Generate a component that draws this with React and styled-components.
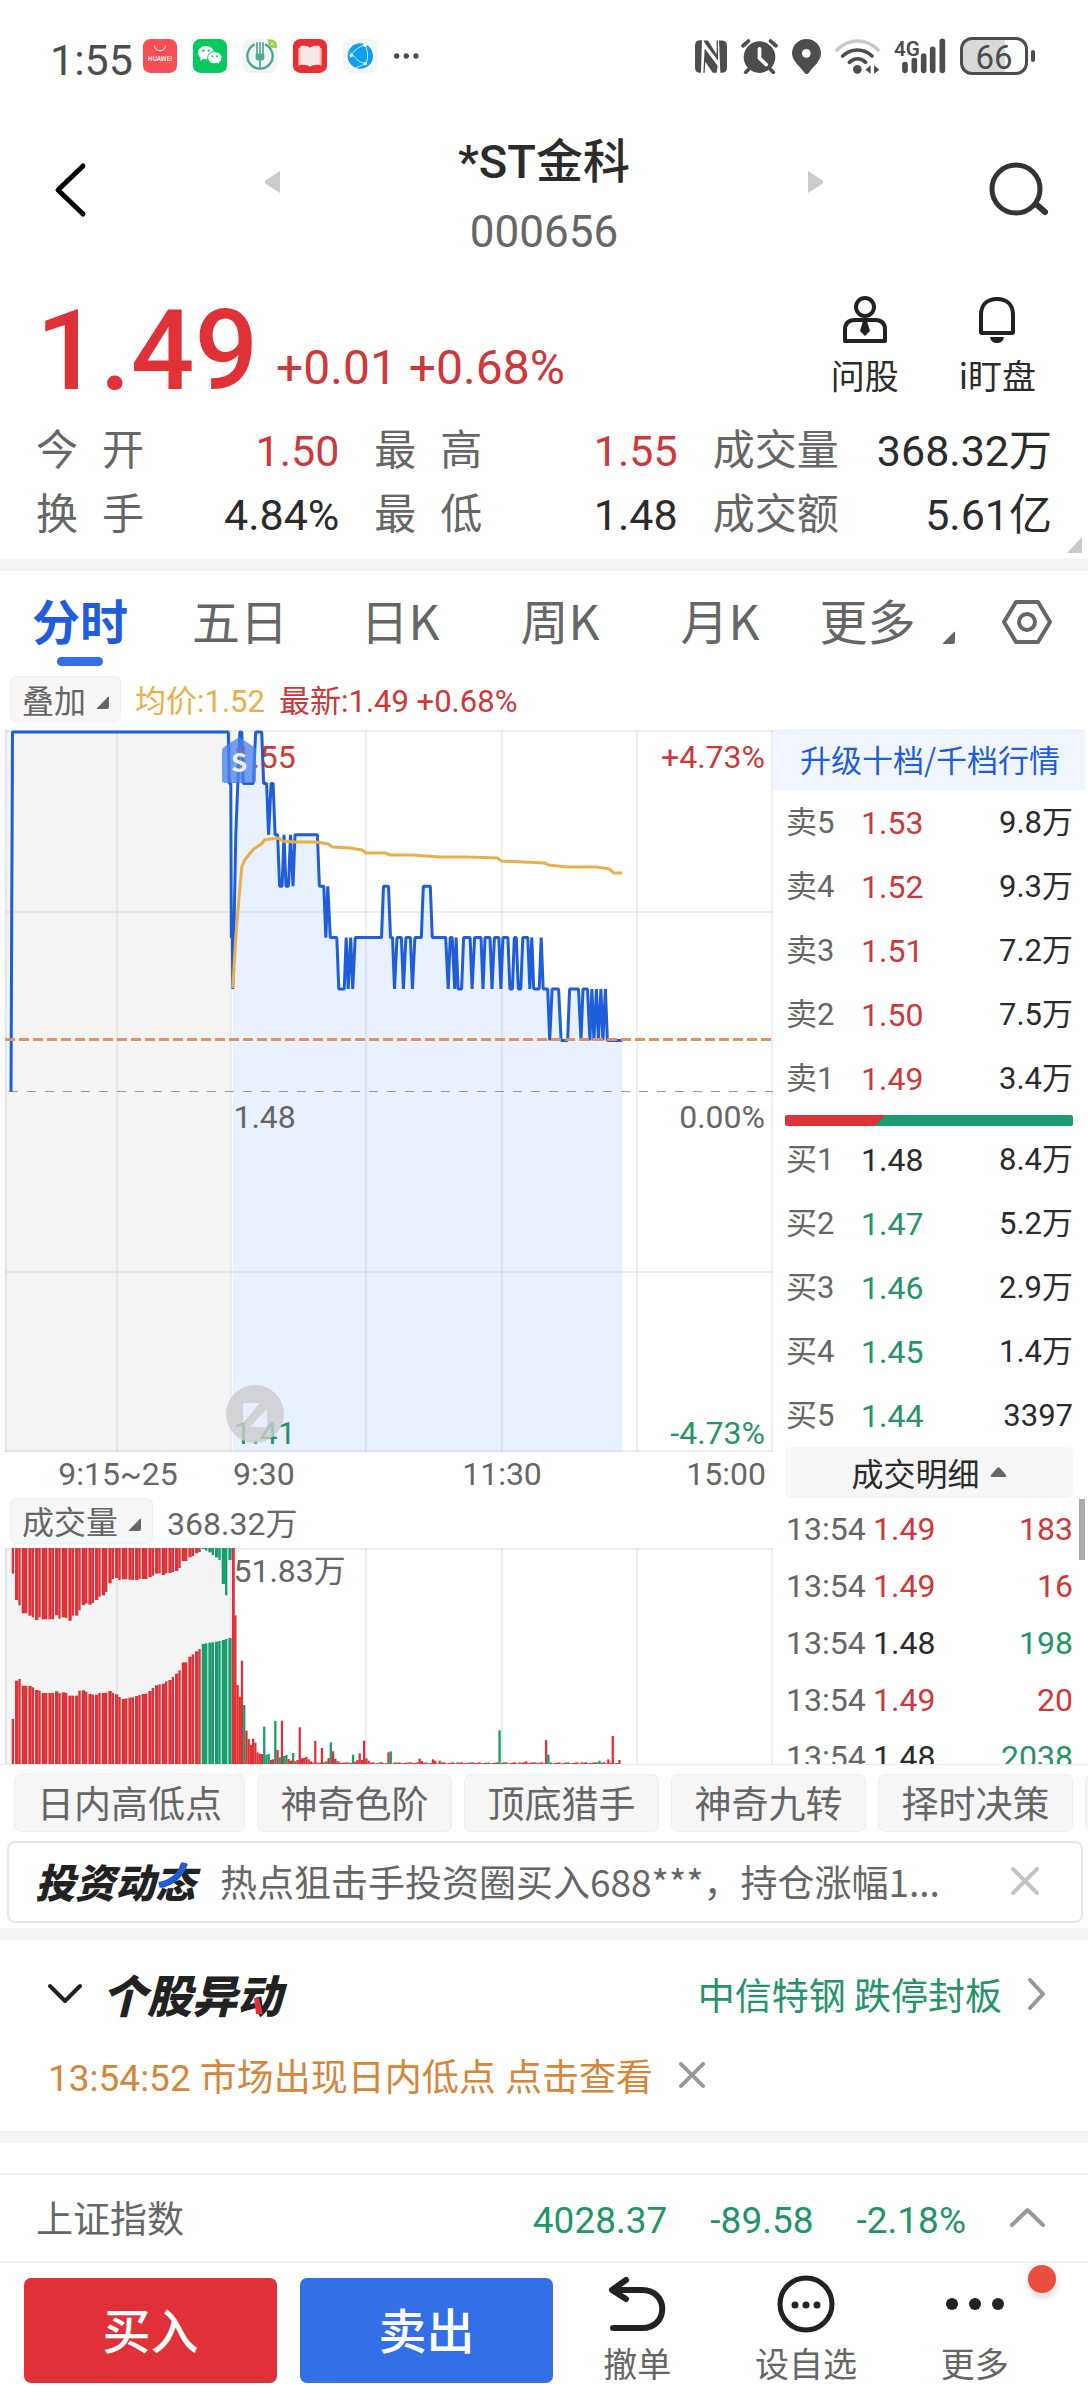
import React from "react";
import styled, { createGlobalStyle, css } from "styled-components";

const c = {
  red: "#cd383b",
  redStrong: "#df3238",
  green: "#249468",
  greenStrong: "#179e6c",
  blue: "#1f5dda",
  blueSoft: "#356fe5",
  ink: "#2b2b2b",
  grey: "#666666",
  faint: "#c4c4c4",
  line: "#ececec",
  band: "#f4f4f4",
  amber: "#e9af4c",
  orange: "#d4863a",
};

const toneColor = {
  up: c.red,
  down: c.green,
  flat: c.ink,
};

const GlobalStyle = createGlobalStyle`
  * { box-sizing: border-box; }
  body {
    margin: 0;
    background: #fff;
    color: ${c.ink};
    font-family: "Noto Sans CJK SC", "Noto Sans", sans-serif;
    -webkit-font-smoothing: antialiased;
  }
  button {
    font: inherit;
    color: inherit;
    background: none;
    border: 0;
    padding: 0;
    margin: 0;
    cursor: pointer;
  }
  svg { display: block; }
`;

const Page = styled.main`
  width: 100%;
  overflow: hidden;
  white-space: nowrap;
`;

// Figures are set in Roboto while keeping the baseline of the surrounding Chinese text.
const Num = styled.span`
  font-family: Roboto, "Noto Sans CJK SC", sans-serif;
  line-height: 0;
`;

const Band = styled.div`
  height: 12px;
  background: ${c.band};
`;

/* ---------- status bar ---------- */

const StatusBar = styled.header`
  display: flex;
  align-items: center;
  justify-content: space-between;
  height: 112px;
  padding: 0 53px 0 50px;
  color: #4d4d4d;
`;

const StatusGroup = styled.div`
  display: flex;
  align-items: center;
  gap: ${(p) => p.$gap}px;
`;

const Clock = styled.time`
  font-size: 43px;
  line-height: 44px;
  margin-right: -6px;
`;

const Battery = styled.div`
  display: flex;
  align-items: center;
  gap: 3px;
`;

const BatteryCell = styled.div`
  width: 68px;
  height: 38px;
  border: 3px solid #4d4d4d;
  border-radius: 12px;
  background: linear-gradient(to right, #d9d9d9 68%, #fff 68%);
  font-size: 33px;
  line-height: 30px;
  text-align: center;
`;

const BatteryTip = styled.div`
  width: 4px;
  height: 12px;
  border-radius: 2px;
  background: #4d4d4d;
`;

function AppStoreIcon() {
  return (
    <svg width="34" height="34" viewBox="0 0 102 102">
      <rect width="102" height="102" rx="22" fill="#f74f55" />
      <path d="M34 19c2 22 32 22 34 0" fill="none" stroke="#fff" strokeWidth="3" />
      <text x="51" y="66" textAnchor="middle" fontSize="19" fontWeight="500" fill="#fff">HUAWEI</text>
    </svg>
  );
}

function ChatIcon() {
  return (
    <svg width="34" height="34" viewBox="0 0 102 102">
      <rect width="102" height="102" rx="22" fill="#06c95f" />
      <path d="M39 21c-14 0-24 9-24 20 0 6 3 11 8 15l-2 9 9-5c3 1 6 1 9 1 13 0 24-9 24-20S53 21 39 21z" fill="#fff" />
      <path d="M65 38c-12 0-21 8-21 18s9 18 21 18c3 0 5 0 8-1l8 4-2-7c5-3 8-8 8-14 0-10-10-18-22-18z" fill="#fff" stroke="#06c95f" strokeWidth="3" />
      <g fill="#06c95f">
        <circle cx="31" cy="35" r="3.5" />
        <circle cx="47" cy="35" r="3.5" />
        <circle cx="58" cy="52" r="3" />
        <circle cx="72" cy="52" r="3" />
      </g>
    </svg>
  );
}

function BankIcon() {
  return (
    <svg width="34" height="34" viewBox="0 0 102 102">
      <rect width="102" height="102" rx="22" fill="#f3f5f5" />
      <path d="M36 16a38 38 0 1 0 30 0" fill="none" stroke="#4da596" strokeWidth="7" />
      <path d="M42 10v36M60 10v36M51 10v76" fill="none" stroke="#4da596" strokeWidth="5" />
      <path d="M38 44h26v12q0 8-8 8H46q-8 0-8-8z" fill="#4da596" />
      <path d="M72 0c6 4 10 0 18 2 10 4 12 14 12 24-10 2-20 0-24-8-3-6-1-10-6-18z" fill="#8fce3c" />
      <path d="M80 8l16 14M94 8L82 20" stroke="#fff" strokeWidth="2" />
    </svg>
  );
}

function ReaderIcon() {
  return (
    <svg width="34" height="34" viewBox="0 0 102 102">
      <rect width="102" height="102" rx="22" fill="#e72f33" />
      <path d="M16 29l8-6v54l-8 4zM86 29l-8-6v54l8 4z" fill="#f7b7b4" />
      <path d="M22 22c10-3 20-1 29 4 9-5 19-7 29-4v56c-10-2-20 0-29 5-9-5-19-7-29-5z" fill="#f5e8e6" />
    </svg>
  );
}

function BrowserIcon() {
  return (
    <svg width="34" height="34" viewBox="0 0 102 102">
      <rect width="102" height="102" rx="22" fill="#f3f4f5" />
      <circle cx="52" cy="51" r="38" fill="#109fee" />
      <path d="M66 16C44 26 28 38 22 56M22 40c18 22 30 32 46 34M66 18c10 20 10 40 2 56M68 74c-14 6-22 10-28 12" fill="none" stroke="#d8f0fd" strokeWidth="3" />
      <g fill="#fff">
        <circle cx="66" cy="19" r="5" />
        <circle cx="25" cy="49" r="5" />
        <circle cx="67" cy="74" r="5" />
      </g>
    </svg>
  );
}

function MoreDots() {
  return (
    <svg width="26" height="34" viewBox="0 0 78 102" fill="#4d4d4d">
      <circle cx="11" cy="51" r="8" />
      <circle cx="40" cy="51" r="8" />
      <circle cx="69" cy="51" r="8" />
    </svg>
  );
}

function NfcIcon() {
  return (
    <svg width="32" height="33" viewBox="45 59 96 98" fill="#4d4d4d">
      <path d="M61 59h5l-3 98h-3q-15 0-15-16V75q0-16 16-16zM117 60h8q16 0 16 16v65q0 16-16 16h-4z" />
      <path d="M70 60h14l26 42V60h4v60L77 72z" />
      <path d="M74 84l39 52-3 21H98L76 124l-2 33h-4z" />
    </svg>
  );
}

function AlarmIcon() {
  return (
    <svg width="37" height="35" viewBox="183 56 110 104">
      <circle cx="238" cy="110" r="47" fill="#4d4d4d" />
      <path d="M189 76l16-14M287 76l-16-14M206 146l-9 9M270 146l9 9" stroke="#4d4d4d" strokeWidth="11" strokeLinecap="round" />
      <path d="M238 85v28l20 19" fill="none" stroke="#fff" strokeWidth="11" strokeLinecap="round" strokeLinejoin="round" />
    </svg>
  );
}

function PinIcon() {
  return (
    <svg width="29" height="35" viewBox="336 55 87 105">
      <path d="M380 55c-25 0-44 19-44 43 0 25 27 41 36 57 4 7 12 7 16 0 9-16 35-32 35-57 0-24-19-43-43-43z" fill="#4d4d4d" />
      <circle cx="379" cy="98" r="13" fill="#fff" />
    </svg>
  );
}

function WifiIcon() {
  return (
    <svg width="45" height="35" viewBox="465 55 135 105" fill="none" strokeLinecap="round" strokeWidth="11">
      <path d="M471 88c36-36 87-36 123 0" stroke="#c9c9c9" />
      <path d="M488 106c26-24 62-24 88 0M508 125c15-14 34-14 49 0" stroke="#4d4d4d" />
      <circle cx="532" cy="146" r="13" fill="#4d4d4d" />
      <path d="M572 134v25l-16-12zM582 134v25l16-12z" fill="#4d4d4d" />
    </svg>
  );
}

function SignalIcon() {
  return (
    <svg width="52" height="36" viewBox="641 54 156 108" overflow="visible">
      <text x="641" y="107" fontSize="62" fontWeight="600" fill="#4d4d4d" fontFamily="Roboto, sans-serif">4G</text>
      <path d="M674 134v17M702 122v29M730 108v43M757 88v63M786 64v87" stroke="#4d4d4d" strokeWidth="17" strokeLinecap="round" />
    </svg>
  );
}

/* ---------- title bar ---------- */

const TitleBar = styled.nav`
  display: grid;
  grid-template-columns: 1fr 2.1fr 1fr;
  align-items: center;
  height: 158px;
`;

const BackButton = styled.button`
  justify-self: start;
  padding: 0 0 2px 54px;
`;

const SearchButton = styled.button`
  justify-self: end;
  padding: 0 39px 4px 0;
`;

const StockSwitcher = styled.div`
  display: flex;
  align-items: center;
  justify-content: space-between;
`;

const StepButton = styled.button`
  padding-bottom: 18px;
`;

const StockTitle = styled.h1`
  margin: 0;
  padding-top: 3px;
  font-size: 47px;
  font-weight: 500;
  line-height: 70px;
  text-align: center;
`;

const StockCode = styled.span`
  display: block;
  font-size: 44px;
  font-weight: 400;
  color: ${c.grey};
`;

/* ---------- quote ---------- */

const Quote = styled.section`
  position: relative;
  padding: 10px 36px 16px;
`;

const PriceRow = styled.div`
  display: flex;
  align-items: flex-end;
  gap: 18px;
  height: 120px;
`;

const Price = styled.strong`
  font-size: 112px;
  font-weight: 500;
  line-height: 120px;
  color: ${c.redStrong};
`;

const Change = styled.span`
  font-size: 48px;
  line-height: 74px;
  color: ${c.red};
`;

const QuickActions = styled.div`
  display: flex;
  gap: 60px;
  margin: 0 16px 0 auto;
`;

const QuickAction = styled.button`
  display: flex;
  flex-direction: column;
  align-items: center;
  gap: 8px;
  font-size: 34px;
  line-height: 46px;
  padding-bottom: 2px;
`;

const Stats = styled.dl`
  display: grid;
  grid-template-columns: 303fr 303fr 339fr;
  column-gap: 35px;
  margin: 15px 0 0;
`;

const Stat = styled.div`
  display: flex;
  justify-content: space-between;
  line-height: 64px;
`;

const StatLabel = styled.dt`
  width: ${(p) => (p.$wide ? "auto" : "108px")};
  font-size: 42px;
  color: ${c.grey};
  text-align: justify;
  text-align-last: justify;
`;

const StatValue = styled.dd`
  margin: 0;
  font-size: 43px;
  color: ${(p) => toneColor[p.$tone]};
`;

const ExpandCorner = styled.svg`
  position: absolute;
  right: 6px;
  bottom: 6px;
`;

const stats = [
  ["今 开", "1.50", "up"],
  ["最 高", "1.55", "up"],
  ["成交量", "368.32万", "flat"],
  ["换 手", "4.84%", "flat"],
  ["最 低", "1.48", "flat"],
  ["成交额", "5.61亿", "flat"],
];

/* ---------- period tabs ---------- */

const Tabs = styled.nav`
  display: grid;
  grid-template-columns: repeat(6, 160fr) 128fr;
  height: 99px;
  padding-top: 16px;
`;

const Tab = styled.button`
  display: flex;
  flex-direction: column;
  align-items: center;
  gap: 6px;
  font-size: 48px;
  line-height: 64px;
  color: ${c.grey};
  ${(p) =>
    p.$active &&
    css`
      font-weight: 700;
      color: ${c.blue};
      &::after {
        content: "";
        width: 46px;
        height: 9px;
        border-radius: 5px;
        background: ${c.blueSoft};
      }
    `}
`;

const MoreTab = styled(Tab)`
  flex-direction: row;
  align-items: flex-start;
  justify-content: center;
  gap: 26px;
  padding-left: 14px;
  & > svg { margin-top: 44px; }
`;

const SettingsButton = styled.button`
  display: flex;
  justify-content: center;
  height: 44px;
  margin-top: 13px;
  padding-left: 6px;
`;

/* ---------- chart ---------- */

const Legend = styled.div`
  display: flex;
  align-items: center;
  gap: 14px;
  height: ${(p) => p.$height}px;
  padding: 0 0 2px 10px;
`;

const Picker = styled.button`
  display: flex;
  align-items: center;
  gap: 10px;
  height: 46px;
  padding: 0 11px 1px;
  border: 1px solid #f1f1f1;
  border-radius: 6px;
  background: #f7f7f7;
  font-size: 32px;
  line-height: 42px;
  color: ${c.grey};
  & > svg { margin-top: 8px; }
`;

const LegendText = styled.span`
  font-size: ${(p) => (p.$large ? 32 : 31)}px;
  line-height: 42px;
  color: ${(p) => p.$color};
`;

const Market = styled.div`
  display: grid;
  grid-template-columns: minmax(0, 1fr) 315px;
  height: 1035px;
  border-bottom: 1px solid ${c.line};
`;

const ChartColumn = styled.div`
  min-width: 0;
`;

const Plot = styled.div`
  position: relative;
  height: ${(p) => p.$height}px;
  padding-left: 5px;
  & > svg { width: 100%; height: 100%; }
`;

const PlotLabel = styled.span`
  position: absolute;
  font-size: 32px;
  line-height: 40px;
  color: ${(p) => p.$color};
  top: ${(p) => p.$top};
  ${(p) => (p.$end ? "right: 8px;" : "left: 30.2%;")}
`;

const SellMarker = styled.svg`
  position: absolute;
  && { width: 34px; height: 46px; }
  left: 28.7%;
  top: 7px;
`;

const FullscreenButton = styled.button`
  position: absolute;
  left: 29.2%;
  bottom: 9px;
`;

const TimeAxis = styled.div`
  display: grid;
  grid-template-columns: 226fr 191fr 160fr 191fr;
  height: 43px;
  padding-left: 5px;
  font-size: 32px;
  line-height: 38px;
  color: ${c.grey};
`;

const AxisTick = styled.span`
  text-align: ${(p) => p.$align};
  padding: 0 7px 0 ${(p) => (p.$align === "left" ? 2 : 7)}px;
`;

const PLOT_W = 768;
const PRICE_H = 722;
const VOL_H = 216;
const GRID_X = [1, 112, 226, 361, 497, 632, 767];

const tickX = (t) => ((t - 10) / 1542) * 767;
const levelY = (n) => 2 + n * 51.4;

// [time, ticks below the day's high]
const priceSeries = [
  [22, 7], [25, 0], [459, 0], [461, 1], [464, 1], [465, 4], [467, 4], [468, 5], [474, 2], [482, 0], [486, 0],
  [489, 1], [509, 1], [514, 0], [526, 0], [530, 1], [536, 1], [540, 2], [545, 1], [549, 1], [553, 2], [558, 2],
  [562, 3], [567, 3], [571, 2], [575, 3], [580, 3], [584, 2], [589, 3], [593, 2], [638, 2], [642, 3], [651, 3],
  [655, 4], [659, 3], [664, 4], [677, 4], [681, 5], [692, 5], [696, 4], [700, 5], [705, 4], [709, 5], [714, 4],
  [767, 4], [771, 3], [781, 3], [785, 4], [789, 4], [793, 5], [798, 4], [807, 4], [811, 5], [816, 4], [825, 4],
  [829, 5], [834, 4], [847, 4], [851, 3], [865, 3], [869, 4], [896, 4], [901, 5], [905, 4], [909, 4], [914, 5],
  [917, 4], [921, 5], [928, 5], [932, 4], [945, 4], [949, 5], [954, 4], [967, 4], [971, 5], [975, 4], [985, 4],
  [989, 5], [994, 4], [1003, 4], [1007, 5], [1011, 4], [1021, 4], [1025, 5], [1030, 5], [1034, 4], [1038, 4],
  [1042, 5], [1047, 5], [1051, 4], [1061, 4], [1065, 5], [1069, 4], [1073, 5], [1084, 5], [1088, 4], [1092, 5],
  [1101, 5], [1105, 6], [1110, 5], [1123, 5], [1128, 6], [1141, 6], [1145, 5], [1163, 5], [1168, 6], [1172, 5],
  [1181, 5], [1186, 6], [1190, 5], [1194, 6], [1199, 5], [1203, 6], [1208, 5], [1212, 6], [1217, 5], [1221, 6],
  [1251, 6],
];

const averageSeries = [
  [468, 258], [474, 207], [480, 170], [486, 137], [492, 130], [500, 125], [510, 119], [525, 114], [532, 110],
  [545, 109], [560, 108], [568, 111], [590, 112], [635, 112], [660, 114], [668, 117], [705, 118], [728, 120],
  [736, 123], [775, 123], [785, 125], [830, 125], [885, 127], [935, 127], [1000, 128], [1008, 131], [1095, 133],
  [1103, 135], [1140, 137], [1200, 137], [1225, 139], [1234, 143], [1251, 143],
];

const toPoints = (list, y) => list.map(([t, v]) => `${tickX(t).toFixed(1)},${y(v).toFixed(1)}`).join(" ");

function PriceChart() {
  const open = priceSeries.filter(([t]) => t >= 468);
  const area = `${tickX(468)},${PRICE_H} ${toPoints(open, levelY)} ${tickX(1251)},${PRICE_H}`;
  return (
    <svg viewBox={`0 0 ${PLOT_W} ${PRICE_H}`} preserveAspectRatio="none" aria-hidden="true">
      <rect width="226" height={PRICE_H} fill="#f4f4f4" />
      <polygon points={area} fill="#e9f0fe" />
      <g stroke="#a0a4b0" strokeOpacity="0.18" strokeWidth="2">
        {GRID_X.map((x) => <path key={x} d={`M${x} 0V${PRICE_H}`} />)}
        <path d={`M0 1H${PLOT_W}M0 182H${PLOT_W}M0 542H${PLOT_W}M0 721H${PLOT_W}`} />
      </g>
      <path d={`M4 361.5H${PLOT_W}`} stroke="#999" strokeWidth="1" strokeDasharray="9 9" />
      <polyline points={toPoints(priceSeries, levelY)} fill="none" stroke={c.blue} strokeWidth="3" strokeLinejoin="bevel" />
      <polyline points={toPoints(averageSeries, (v) => v)} fill="none" stroke={c.amber} strokeWidth="3" />
      <path d={`M0 309.5H${PLOT_W}`} stroke="#e3915f" strokeWidth="3" strokeDasharray="10 4" />
    </svg>
  );
}

// Call auction: matched depth hanging from the top and rising from the base, in 1/648 of the plot height.
const auctionTop = [
  77, 156, 172, 196, 196, 203, 208, 216, 208, 214, 214, 214, 214, 202, 212, 208, 210, 218, 203, 203, 187, 171, 167,
  170, 165, 156, 146, 142, 132, 106, 93, 90, 96, 94, 94, 95, 96, 96, 93, 93, 93, 88, 83, 77, 76, 81, 76, 75, 72, 69,
  60, 39, 39, 28, 24, 16, 12, 3, 8, 13, 21, 28, 36, 108, 142, 36,
];
const auctionBase = [
  135, 250, 255, 235, 235, 234, 230, 222, 220, 213, 213, 213, 213, 218, 213, 215, 213, 205, 205, 205, 220, 221, 217,
  210, 208, 208, 213, 213, 214, 219, 213, 209, 201, 195, 197, 199, 200, 204, 207, 210, 211, 219, 228, 236, 239, 241,
  248, 252, 261, 271, 281, 305, 305, 322, 329, 338, 345, 360, 362, 364, 365, 367, 369, 372, 375, 378,
];
const AUCTION_FALL = 57;

// Minute bars: negative values are falling minutes.
const minuteBars = {
  0: 648, 1: 446, 2: 237, 3: 202, 4: 310, 5: -177, 6: 100, 7: 75, 8: 57, 9: 76, 10: 64, 11: 35, 12: 31, 13: 30,
  14: -112, 15: -27, 16: -30, 17: 12, 18: 14, 19: -129, 20: 42, 21: -20, 22: 130, 23: -24, 24: -27, 25: 15, 26: 10,
  27: -33, 28: 8, 29: 12, 30: 110, 31: 17, 32: 18, 33: 21, 34: 14, 35: 8, 36: 4, 37: 69, 38: 4, 39: 4, 40: 48,
  41: -5, 42: 8, 43: 18, 44: -65, 45: 38, 46: 16, 47: 9, 48: 5, 54: -28, 55: 7, 56: 12, 57: 32, 58: 12, 59: 70,
  60: 17, 61: 10, 70: 35, 71: -38, 84: 16, 85: 9, 90: 14, 91: 10, 93: 10, 120: -101, 132: 8, 141: 72, 142: -28,
  165: -10, 169: 14, 171: 84, 174: 12,
};

function VolumeChart() {
  const u = VOL_H / 648;
  const pitch = 10 / 3;
  const minutes = Array.from({ length: 175 }, (_, i) => minuteBars[i] ?? (i % 7 === 3 ? -5 : 2 + (i % 4)));
  return (
    <svg viewBox={`0 0 ${PLOT_W} ${VOL_H}`} preserveAspectRatio="none" aria-hidden="true">
      <rect width="226" height={VOL_H} fill="#f4f4f4" />
      <g stroke="#a0a4b0" strokeOpacity="0.18" strokeWidth="2">
        {GRID_X.map((x) => <path key={x} d={`M${x} 0V${VOL_H}`} />)}
        <path d={`M0 1H${PLOT_W}`} />
      </g>
      {auctionTop.map((top, i) => {
        const x = 6.7 + i * pitch;
        const w = i % 2 ? pitch : pitch - 1;
        const fill = i < AUCTION_FALL ? c.redStrong : c.greenStrong;
        const base = auctionBase[i];
        return (
          <g key={i} fill={fill}>
            <rect x={x} y="0" width={w} height={top * u} />
            <rect x={x} y={VOL_H - base * u} width={w} height={base * u} />
          </g>
        );
      })}
      {minutes.map((v, i) => {
        const h = Math.abs(v) * u;
        return (
          <rect
            key={i}
            x={227 + i * 2.22}
            y={VOL_H - h}
            width={i === 0 ? 2.8 : 2.3}
            height={h}
            fill={v < 0 ? c.greenStrong : c.redStrong}
          />
        );
      })}
    </svg>
  );
}

function Corner() {
  return (
    <svg width="13" height="13" viewBox="0 0 12 12">
      <path d="M12 1v9q0 2-2 2H1q-1 0 0-1L11 1q1-1 1 0z" fill={c.grey} />
    </svg>
  );
}

/* ---------- order book ---------- */

const BookPanel = styled.aside`
  position: relative;
  height: 1034px;
  margin-right: 3px;
  overflow: hidden;
  border-top: 1px solid ${c.line};
`;

const UpgradeLink = styled.a`
  display: block;
  height: 59px;
  padding-left: 2px;
  background: #f1f6fe;
  font-size: 31px;
  line-height: 56px;
  text-align: center;
  color: ${c.blue};
  text-decoration: none;
`;

const BookBody = styled.div`
  padding: 0 12px;
`;

const BookTable = styled.table`
  width: 100%;
  border-collapse: collapse;
  table-layout: fixed;
`;

const BookRow = styled.tr`
  height: ${(p) => p.$height}px;
`;

const BookLabel = styled.th`
  width: ${(p) => p.$width}px;
  padding: 0 0 4px 1px;
  font-size: ${(p) => p.$size}px;
  font-weight: 400;
  line-height: 40px;
  text-align: left;
  color: ${c.grey};
`;

const BookCell = styled.td`
  padding: 0 0 4px;
  font-size: ${(p) => p.$size}px;
  line-height: 40px;
  text-align: ${(p) => (p.$end ? "right" : "left")};
  color: ${(p) => toneColor[p.$tone]};
`;

const RatioBar = styled.div`
  height: 11px;
  margin: 5px 0 1px;
  border-radius: 2px;
  background: linear-gradient(135deg, ${c.redStrong} 33.5%, ${c.greenStrong} 33.5%);
`;

const DetailButton = styled.button`
  display: flex;
  align-items: center;
  justify-content: center;
  gap: 10px;
  width: 100%;
  height: 51px;
  margin-bottom: 1px;
  padding-bottom: 2px;
  border-radius: 6px;
  background: #f6f6f6;
  font-size: 32px;
  line-height: 46px;
`;

const ScrollThumb = styled.div`
  position: absolute;
  top: 768px;
  right: 0;
  width: 6px;
  height: 61px;
  background: #ababab;
`;

const asks = [
  ["卖5", "1.53", "up", "9.8万"],
  ["卖4", "1.52", "up", "9.3万"],
  ["卖3", "1.51", "up", "7.2万"],
  ["卖2", "1.50", "up", "7.5万"],
  ["卖1", "1.49", "up", "3.4万"],
];
const bids = [
  ["买1", "1.48", "flat", "8.4万"],
  ["买2", "1.47", "down", "5.2万"],
  ["买3", "1.46", "down", "2.9万"],
  ["买4", "1.45", "down", "1.4万"],
  ["买5", "1.44", "down", "3397"],
];
const trades = [
  ["13:54", "1.49", "up", "183", "up"],
  ["13:54", "1.49", "up", "16", "up"],
  ["13:54", "1.48", "flat", "198", "down"],
  ["13:54", "1.49", "up", "20", "up"],
  ["13:54", "1.48", "flat", "2038", "down"],
];

function Levels({ rows }) {
  return (
    <BookTable>
      <tbody>
        {rows.map(([label, price, tone, amount]) => (
          <BookRow key={label} $height={64}>
            <BookLabel scope="row" $width={76} $size={31}><Num>{label}</Num></BookLabel>
            <BookCell $tone={tone} $size={32}><Num>{price}</Num></BookCell>
            <BookCell $tone="flat" $size={31} $end><Num>{amount}</Num></BookCell>
          </BookRow>
        ))}
      </tbody>
    </BookTable>
  );
}

function OrderBook() {
  return (
    <BookPanel>
      <UpgradeLink href="#depth">升级十档/千档行情</UpgradeLink>
      <BookBody>
        <Levels rows={asks} />
        <RatioBar />
        <Levels rows={bids} />
        <DetailButton>
          成交明细
          <svg width="17" height="10" viewBox="0 0 17 10">
            <path d="M1 8L7 1q1.500-1.500 3 0l6 7q1 2-1 2H2q-2 0-1-2z" fill={c.grey} />
          </svg>
        </DetailButton>
        <BookTable>
          <tbody>
            {trades.map(([time, price, tone, amount, amountTone], i) => (
              <BookRow key={i} $height={57}>
                <BookLabel scope="row" $width={88} $size={32}><Num>{time}</Num></BookLabel>
                <BookCell $tone={tone} $size={32}><Num>{price}</Num></BookCell>
                <BookCell $tone={amountTone} $size={32} $end><Num>{amount}</Num></BookCell>
              </BookRow>
            ))}
          </tbody>
        </BookTable>
      </BookBody>
      <ScrollThumb />
    </BookPanel>
  );
}

/* ---------- indicator tags ---------- */

const TagRow = styled.div`
  display: flex;
  gap: 12px;
  padding: 9px 0 9px 14px;
  overflow: hidden;
`;

const Tag = styled.button`
  flex: none;
  min-width: 195px;
  height: 58px;
  padding: 0 22px 2px;
  border: 1px solid #eeeeee;
  border-radius: 7px;
  background: #f6f6f6;
  font-size: 37px;
  line-height: 52px;
  color: ${c.grey};
`;

/* ---------- news ---------- */

const NewsCard = styled.section`
  display: flex;
  align-items: center;
  height: 82px;
  margin: 0 5px 5px 7px;
  padding: 0 42px 2px 26px;
  border: 2px solid #e8e8e8;
  border-radius: 8px;
`;

const Wordmark = styled.h2`
  position: relative;
  flex: none;
  margin: 0;
  font-size: ${(p) => p.$size}px;
  font-weight: 900;
  font-style: italic;
  line-height: 56px;
  color: #222;
`;

const Accent = styled.svg`
  position: absolute;
  right: ${(p) => p.$right}px;
  top: ${(p) => p.$top}px;
`;

const NewsText = styled.a`
  flex: 1;
  min-width: 0;
  margin-left: 25px;
  font-size: 37px;
  line-height: 54px;
  color: ${c.grey};
  text-decoration: none;
`;

const Moves = styled.section`
  padding: 13px 42px 16px 48px;
`;

const MoveRow = styled.div`
  display: flex;
  align-items: center;
  gap: 20px;
  height: 81px;
  font-size: 37px;
  line-height: 54px;
`;

const MoveLink = styled.a`
  display: flex;
  align-items: center;
  gap: 25px;
  margin-left: auto;
  color: ${c.green};
  text-decoration: none;
`;

const AlertLink = styled.a`
  padding-right: 6px;
  color: ${c.orange};
  text-decoration: none;
`;

function Cross({ size, color }) {
  return (
    <svg width={size} height={size} viewBox="0 0 28 28">
      <path d="M2 2l24 24M26 2L2 26" stroke={color} strokeWidth="4" strokeLinecap="round" />
    </svg>
  );
}

/* ---------- index strip and action bar ---------- */

const IndexStrip = styled.section`
  display: flex;
  align-items: center;
  height: 88px;
  margin-top: 30px;
  padding: 0 43px 3px 36px;
  border-top: 2px solid #f1f1f1;
  font-size: 37px;
  line-height: 54px;
  color: ${c.grey};
`;

const IndexFigures = styled.div`
  display: flex;
  gap: 43px;
  margin: 0 44px 0 auto;
  color: ${c.green};
`;

const ActionBar = styled.footer`
  position: relative;
  display: grid;
  grid-template-columns: 253fr 253fr 483fr;
  column-gap: 23px;
  height: 139px;
  padding: 15px 29px 0 24px;
  border-top: 2px solid #f1f1f1;
`;

const TradeButton = styled.button`
  height: 105px;
  padding-bottom: 5px;
  border-radius: 7px;
  background: ${(p) => (p.$sell ? "#3370e7" : "#df3137")};
  font-size: 48px;
  font-weight: 500;
  color: #fff;
`;

const Tools = styled.div`
  display: grid;
  grid-template-columns: repeat(3, 1fr);
  align-items: start;
  margin: -3px 0 0 -23px;
`;

const Tool = styled.button`
  display: flex;
  flex-direction: column;
  align-items: center;
  gap: 8px;
  font-size: 34px;
  line-height: 44px;
  color: ${c.grey};
`;

const Badge = styled.span`
  position: absolute;
  top: 2px;
  right: 32px;
  width: 28px;
  height: 28px;
  border-radius: 50%;
  background: #e94f41;
  box-shadow: 1px 5px 6px rgba(0, 0, 0, 0.14);
`;

export default function App() {
  return (
    <Page>
      <GlobalStyle />

      <StatusBar>
        <StatusGroup $gap={16}>
          <Clock><Num>1:55</Num></Clock>
          <AppStoreIcon />
          <ChatIcon />
          <BankIcon />
          <ReaderIcon />
          <BrowserIcon />
          <MoreDots />
        </StatusGroup>
        <StatusGroup $gap={14}>
          <NfcIcon />
          <AlarmIcon />
          <PinIcon />
          <WifiIcon />
          <SignalIcon />
          <Battery>
            <BatteryCell><Num>66</Num></BatteryCell>
            <BatteryTip />
          </Battery>
        </StatusGroup>
      </StatusBar>

      <TitleBar>
        <BackButton aria-label="返回">
          <svg width="33" height="56" viewBox="0 0 33 56" fill="none" stroke="#000" strokeWidth="5" strokeLinecap="round" strokeLinejoin="round">
            <path d="M29 4L4 28l25 24" />
          </svg>
        </BackButton>
        <StockSwitcher>
          <StepButton aria-label="上一只">
            <svg width="15" height="24" viewBox="0 0 15 24"><path d="M15 1v22L1 14q-2-2 0-4z" fill="#cbcbcb" /></svg>
          </StepButton>
          <StockTitle>
            <Num>*ST金科</Num>
            <StockCode><Num>000656</Num></StockCode>
          </StockTitle>
          <StepButton aria-label="下一只">
            <svg width="15" height="24" viewBox="0 0 15 24"><path d="M0 1v22l14-9q2-2 0-4z" fill="#cbcbcb" /></svg>
          </StepButton>
        </StockSwitcher>
        <SearchButton aria-label="搜索">
          <svg width="60" height="54" viewBox="0 0 60 54" fill="none" stroke="#333" strokeLinecap="round">
            <circle cx="27" cy="27" r="24" strokeWidth="5" />
            <path d="M47 42l9 8" strokeWidth="6" />
          </svg>
        </SearchButton>
      </TitleBar>

      <Quote>
        <PriceRow>
          <Price><Num>1.49</Num></Price>
          <Change><Num>+0.01 +0.68%</Num></Change>
          <QuickActions>
            <QuickAction>
              <svg width="46" height="48" viewBox="0 0 46 48" fill="none" stroke="#222" strokeWidth="4">
                <circle cx="23" cy="11" r="9" />
                <path d="M3 45V34q0-10 10-10h20q10 0 10 10v11z" strokeLinejoin="round" />
                <path d="M21 25h4l3 10-5 5-5-5z" fill="#222" stroke="none" />
              </svg>
              问股
            </QuickAction>
            <QuickAction>
              <svg width="38" height="48" viewBox="0 0 38 48">
                <path d="M3 36V19C3 9 9 3 19 3s16 6 16 16v17q0 1-1 1H4q-1 0-1-1z" fill="none" stroke="#222" strokeWidth="4" />
                <path d="M12 41h14q-1 6-7 6t-7-6z" fill="#222" />
              </svg>
              i盯盘
            </QuickAction>
          </QuickActions>
        </PriceRow>
        <Stats>
          {stats.map(([label, value, tone]) => (
            <Stat key={label}>
              <StatLabel $wide={!label.includes(" ")}>{label}</StatLabel>
              <StatValue $tone={tone}><Num>{value}</Num></StatValue>
            </Stat>
          ))}
        </Stats>
        <ExpandCorner width="15" height="16" viewBox="0 0 15 16"><path d="M15 0v16H0z" fill="#c9c9c9" /></ExpandCorner>
      </Quote>
      <Band />

      <Tabs>
        <Tab $active aria-current="true">分时</Tab>
        <Tab>五日</Tab>
        <Tab>日K</Tab>
        <Tab>周K</Tab>
        <Tab>月K</Tab>
        <MoreTab>更多<Corner /></MoreTab>
        <SettingsButton aria-label="设置">
          <svg width="50" height="44" viewBox="0 0 50 44" fill="none" stroke={c.grey} strokeWidth="4" strokeLinejoin="round">
            <path d="M14 2h22l12 20-12 20H14L2 22z" />
            <circle cx="25" cy="22" r="8" />
          </svg>
        </SettingsButton>
      </Tabs>

      <Legend $height={60}>
        <Picker>叠加<Corner /></Picker>
        <LegendText $color={c.amber}><Num>均价:1.52</Num></LegendText>
        <LegendText $color={c.red}><Num>最新:1.49 +0.68%</Num></LegendText>
      </Legend>

      <Market>
        <ChartColumn>
          <Plot $height={722}>
            <PriceChart />
            <PlotLabel $color={c.red} $top="4px"><Num>1.55</Num></PlotLabel>
            <PlotLabel $color={c.red} $top="4px" $end><Num>+4.73%</Num></PlotLabel>
            <PlotLabel $color={c.grey} $top="364px"><Num>1.48</Num></PlotLabel>
            <PlotLabel $color={c.grey} $top="364px" $end><Num>0.00%</Num></PlotLabel>
            <PlotLabel $color={c.green} $top="680px"><Num>1.41</Num></PlotLabel>
            <PlotLabel $color={c.green} $top="680px" $end><Num>-4.73%</Num></PlotLabel>
            <SellMarker viewBox="0 0 34 46">
              <path d="M17 0l15 10q2 1 2 4v29q0 3-3 3H3q-3 0-3-3V14q0-3 2-4z" fill="#4a83ea" fillOpacity="0.78" />
              <text x="17" y="35" textAnchor="middle" fontSize="26" fontWeight="700" fill="#fff" fillOpacity="0.9">S</text>
            </SellMarker>
            <FullscreenButton aria-label="全屏">
              <svg width="58" height="58" viewBox="0 0 58 58">
                <circle cx="29" cy="29" r="29" fill="#cccccc" fillOpacity="0.8" />
                <path d="M17 18h17L17 38zM41 24v18H24z" fill="#e9eefa" />
              </svg>
            </FullscreenButton>
          </Plot>
          <TimeAxis>
            <AxisTick $align="center"><Num>9:15~25</Num></AxisTick>
            <AxisTick $align="left"><Num>9:30</Num></AxisTick>
            <AxisTick $align="center"><Num>11:30</Num></AxisTick>
            <AxisTick $align="right"><Num>15:00</Num></AxisTick>
          </TimeAxis>
          <Legend $height={53}>
            <Picker>成交量<Corner /></Picker>
            <LegendText $large $color={c.grey}><Num>368.32万</Num></LegendText>
          </Legend>
          <Plot $height={216}>
            <VolumeChart />
            <PlotLabel $color={c.grey} $top="0px"><Num>51.83万</Num></PlotLabel>
          </Plot>
        </ChartColumn>
        <OrderBook />
      </Market>

      <TagRow>
        <Tag>日内高低点</Tag>
        <Tag>神奇色阶</Tag>
        <Tag>顶底猎手</Tag>
        <Tag>神奇九转</Tag>
        <Tag>择时决策</Tag>
        <Tag aria-hidden="true" tabIndex={-1} />
      </TagRow>

      <NewsCard>
        <Wordmark $size={40}>
          投资动态
          <Accent $right={6} $top={9} width="34" height="26" viewBox="0 0 34 26">
            <path d="M30 1q-6 18-26 22" fill="none" stroke={c.blue} strokeWidth="6" />
          </Accent>
        </Wordmark>
        <NewsText href="#news">热点狙击手投资圈买入688***，持仓涨幅1...</NewsText>
        <button aria-label="关闭"><Cross size={28} color={c.faint} /></button>
      </NewsCard>
      <Band />

      <Moves>
        <MoveRow>
          <svg width="34" height="22" viewBox="0 0 34 22" fill="none" stroke="#222" strokeWidth="4" strokeLinecap="round" strokeLinejoin="round">
            <path d="M2 3l15 15L32 3" />
          </svg>
          <Wordmark $size={45}>
            个股异动
            <Accent $right={18} $top={32} width="13" height="16" viewBox="0 0 13 16">
              <path d="M3 0h5l4 16H5z" fill={c.redStrong} />
            </Accent>
          </Wordmark>
          <MoveLink href="#moves">
            中信特钢 跌停封板
            <svg width="19" height="32" viewBox="0 0 19 32" fill="none" stroke="#999" strokeWidth="4" strokeLinecap="round" strokeLinejoin="round">
              <path d="M3 2l13 14L3 30" />
            </svg>
          </MoveLink>
        </MoveRow>
        <MoveRow>
          <AlertLink href="#alert"><Num>13:54:52 市场出现日内低点 点击查看</Num></AlertLink>
          <button aria-label="关闭提醒"><Cross size={26} color="#999" /></button>
        </MoveRow>
      </Moves>
      <Band />

      <IndexStrip>
        上证指数
        <IndexFigures>
          <span><Num>4028.37</Num></span>
          <span><Num>-89.58</Num></span>
          <span><Num>-2.18%</Num></span>
        </IndexFigures>
        <button aria-label="展开指数">
          <svg width="35" height="20" viewBox="0 0 35 20" fill="none" stroke="#999" strokeWidth="4" strokeLinecap="round" strokeLinejoin="round">
            <path d="M2 18L17.500 3 33 18" />
          </svg>
        </button>
      </IndexStrip>

      <ActionBar>
        <TradeButton>买入</TradeButton>
        <TradeButton $sell>卖出</TradeButton>
        <Tools>
          <Tool>
            <svg width="58" height="58" viewBox="0 0 58 58" fill="none" stroke="#222" strokeWidth="6" strokeLinecap="round" strokeLinejoin="round">
              <path d="M18 5L4 15l14 9" />
              <path d="M5 15h29c27 0 27 38 0 38H5" />
            </svg>
            撤单
          </Tool>
          <Tool>
            <svg width="58" height="58" viewBox="0 0 58 58">
              <circle cx="29" cy="29" r="26" fill="none" stroke="#222" strokeWidth="5" />
              <g fill="#222"><circle cx="18" cy="30" r="3.500" /><circle cx="29" cy="30" r="3.500" /><circle cx="40" cy="30" r="3.500" /></g>
            </svg>
            设自选
          </Tool>
          <Tool>
            <svg width="58" height="58" viewBox="0 0 58 58" fill="#222">
              <circle cx="6" cy="29" r="6" /><circle cx="29" cy="29" r="6" /><circle cx="52" cy="29" r="6" />
            </svg>
            更多
          </Tool>
        </Tools>
        <Badge />
      </ActionBar>
    </Page>
  );
}
